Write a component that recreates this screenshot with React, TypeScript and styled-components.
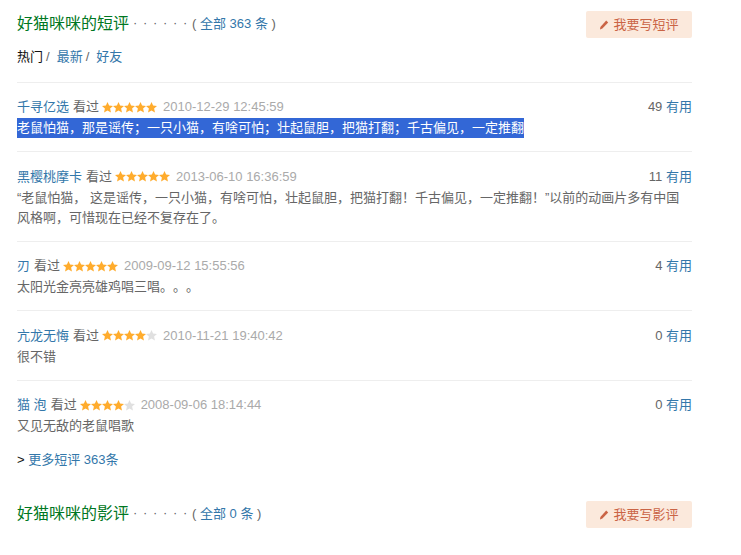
import * as React from "react";
import styled, { createGlobalStyle } from "styled-components";

const GlobalStyle = createGlobalStyle`
  html, body {
    margin: 0;
    padding: 0;
    background: #fff;
    font-family: "Liberation Sans", "Noto Sans CJK SC", sans-serif;
    font-size: 13px;
    color: #666;
    text-spacing-trim: space-all;
  }
`;

const Page = styled.div`
  width: 675px;
  padding: 11px 0 0 17px;
`;

const Header = styled.div<{ $top?: number }>`
  display: flex;
  justify-content: space-between;
  align-items: flex-start;
  height: 27px;
  margin-top: ${(p) => p.$top ?? 0}px;
`;

const Heading = styled.div`
  display: flex;
  align-items: center;
  height: 22px;
`;

const Title = styled.span`
  font-size: 16px;
  color: #072;
`;

const Dots = styled.span`
  color: #666;
  font-size: 13px;
  letter-spacing: 5.67px;
  margin-left: 4px;
`;

const Count = styled.span`
  color: #666;
  font-size: 13px;
  margin-left: -1px;
`;

const Link = styled.a`
  color: #37a;
  text-decoration: none;
`;

const WriteButton = styled.a`
  display: flex;
  align-items: center;
  justify-content: center;
  gap: 4px;
  width: 106px;
  height: 24px;
  padding-bottom: 3px;
  border-radius: 2px;
  background: #fbe9dc;
  color: #ca6445;
  font-size: 13px;
`;

const PenWrap = styled.span`
  display: flex;
  padding-top: 3px;
`;

const Tabs = styled.div`
  display: flex;
  margin-top: 9px;
  height: 20px;
  line-height: 20px;
  color: #666;
`;

const Tab = styled.span<{ $active?: boolean }>`
  color: ${(p) => (p.$active ? "#111" : "#37a")};
`;

const Slash = styled.span`
  margin: 0 7px 0 3px;
`;

const List = styled.div`
  margin-top: 14.5px;
`;

const Row = styled.div`
  border-top: 1px solid #eee;
  padding: 14.5px 0 13px;
`;

const Meta = styled.div`
  display: flex;
  justify-content: space-between;
  height: 20px;
  line-height: 20px;
`;

const Who = styled.div`
  display: flex;
  align-items: center;
`;

const Watched = styled.span`
  margin-left: 4px;
  color: #666;
`;

const StarRow = styled.span`
  display: inline-flex;
  margin-left: 3px;
`;

const Time = styled.span`
  margin-left: 6px;
  font-size: 13px;
  color: #aaa;
`;

const Useful = styled.span`
  color: #666;
  & b {
    font-weight: normal;
    color: #37a;
  }
`;

const Body = styled.p`
  margin: 1px 0 0;
  line-height: 20px;
  color: #666;
`;

const Selected = styled.span`
  display: block;
  width: fit-content;
  background: #3367d6;
  color: #fff;
`;

const More = styled.div`
  margin-top: 1px;
  height: 20px;
  line-height: 20px;
  color: #111;
`;

const PenIcon = () => (
  <PenWrap>
    <svg width="10" height="10" viewBox="0 0 10 10">
      <path d="M7.2.6 9.2 2.4 3.4 8.6 1 9.6 1.4 7z" fill="#ca6445" />
    </svg>
  </PenWrap>
);

const Star = ({ on }: { on: boolean }) => (
  <svg width="11" height="11" viewBox="0 0 22 22">
    <path
      d="M11 0l3.200 7.200 7.800.8-5.800 5.200 1.700 7.800-6.900-4-6.900 4 1.700-7.800L0 8l7.800-.8z"
      fill={on ? "#ffac2d" : "#e0e0e0"}
    />
  </svg>
);

const Stars = ({ n }: { n: number }) => (
  <StarRow>
    {[1, 2, 3, 4, 5].map((i) => (
      <Star key={i} on={i <= n} />
    ))}
  </StarRow>
);

const reviews = [
  {
    name: "千寻亿选",
    stars: 5,
    time: "2010-12-29 12:45:59",
    votes: 49,
    text: "老鼠怕猫，那是谣传；一只小猫，有啥可怕；壮起鼠胆，把猫打翻；千古偏见，一定推翻",
    selected: true,
  },
  {
    name: "黑樱桃摩卡",
    stars: 5,
    time: "2013-06-10 16:36:59",
    votes: 11,
    text: "“老鼠怕猫， 这是谣传，一只小猫，有啥可怕，壮起鼠胆，把猫打翻！千古偏见，一定推翻！”以前的动画片多有中国风格啊，可惜现在已经不复存在了。",
  },
  {
    name: "刃",
    stars: 5,
    time: "2009-09-12 15:55:56",
    votes: 4,
    text: "太阳光金亮亮雄鸡唱三唱。。。",
  },
  {
    name: "亢龙无悔",
    stars: 4,
    time: "2010-11-21 19:40:42",
    votes: 0,
    text: "很不错",
  },
  {
    name: "猫 泡",
    stars: 4,
    time: "2008-09-06 18:14:44",
    votes: 0,
    text: "又见无敌的老鼠唱歌",
  },
];

export default function App() {
  return (
    <Page>
      <GlobalStyle />
      <Header>
        <Heading>
          <Title>好猫咪咪的短评</Title>
          <Dots>······</Dots>
          <Count>
            ( <Link>全部 363 条</Link> )
          </Count>
        </Heading>
        <WriteButton>
          <PenIcon />
          我要写短评
        </WriteButton>
      </Header>
      <Tabs>
        <Tab $active>热门</Tab>
        <Slash>/</Slash>
        <Tab>最新</Tab>
        <Slash>/</Slash>
        <Tab>好友</Tab>
      </Tabs>
      <List>
        {reviews.map((r) => (
          <Row key={r.name}>
            <Meta>
              <Who>
                <Link>{r.name}</Link>
                <Watched>看过</Watched>
                <Stars n={r.stars} />
                <Time>{r.time}</Time>
              </Who>
              <Useful>
                {r.votes} <b>有用</b>
              </Useful>
            </Meta>
            <Body>{r.selected ? <Selected>{r.text}</Selected> : r.text}</Body>
          </Row>
        ))}
      </List>
      <More>
        &gt; <Link>更多短评 363条</Link>
      </More>
      <Header $top={31}>
        <Heading>
          <Title>好猫咪咪的影评</Title>
          <Dots>······</Dots>
          <Count>
            ( <Link>全部 0 条</Link> )
          </Count>
        </Heading>
        <WriteButton>
          <PenIcon />
          我要写影评
        </WriteButton>
      </Header>
    </Page>
  );
}
